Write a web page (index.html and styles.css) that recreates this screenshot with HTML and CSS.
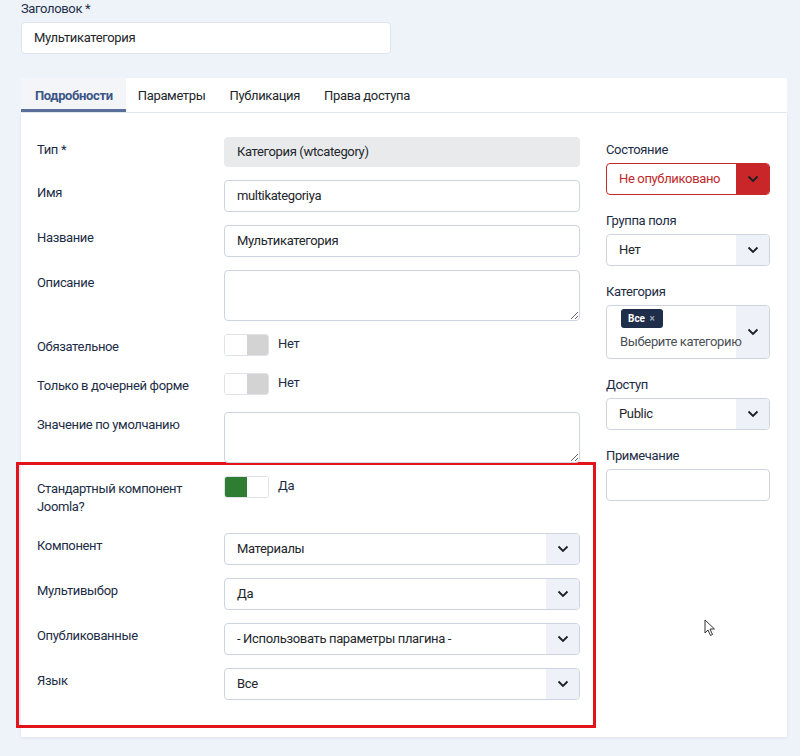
FILE: index.html
```html
<!doctype html>
<html lang="ru">
    <head>
        <meta charset="UTF-8" />
        <meta name="viewport" content="width=device-width, initial-scale=1.0" />
        <title>Поле: Мультикатегория</title>
        <link rel="stylesheet" href="styles.css">
    </head>
    <body>
        <div class="page">
            <label class="title-label">Заголовок *</label>
            <div class="title-input">Мультикатегория</div>

            <div class="tabs">
                <div class="tab active">Подробности</div>
                <div class="tab">Параметры</div>
                <div class="tab">Публикация</div>
                <div class="tab">Права доступа</div>
            </div>

            <div class="card">
                <div class="main">
                    <div class="row">
                        <div class="label">Тип *</div>
                        <div class="input readonly">Категория (wtcategory)</div>
                    </div>
                    <div class="row">
                        <div class="label">Имя</div>
                        <div class="input">multikategoriya</div>
                    </div>
                    <div class="row">
                        <div class="label">Название</div>
                        <div class="input">Мультикатегория</div>
                    </div>
                    <div class="row">
                        <div class="label">Описание</div>
                        <textarea class="textarea"></textarea>
                    </div>
                    <div class="row">
                        <div class="label">Обязательное</div>
                        <div class="switch">
                            <span class="switch-box"><span class="on"></span><span class="off"></span></span>
                            <span class="switch-text">Нет</span>
                        </div>
                    </div>
                    <div class="row">
                        <div class="label">Только в дочерней форме</div>
                        <div class="switch">
                            <span class="switch-box"><span class="on"></span><span class="off"></span></span>
                            <span class="switch-text">Нет</span>
                        </div>
                    </div>
                    <div class="row">
                        <div class="label">Значение по умолчанию</div>
                        <textarea class="textarea"></textarea>
                    </div>

                    <!-- выделенный блок -->
                    <div class="highlight">
                        <div class="row row-tall">
                            <div class="label">Стандартный компонент Joomla?</div>
                            <div class="switch">
                                <span class="switch-box checked"><span class="on"></span><span class="off"></span></span>
                                <span class="switch-text">Да</span>
                            </div>
                        </div>
                        <div class="row">
                            <div class="label">Компонент</div>
                            <div class="select">
                                <span class="select-value">Материалы</span>
                                <span class="select-arrow"><svg width="12" height="8" viewBox="0 0 12 8"><polyline points="1.5,1.5 6,6 10.5,1.5" fill="none" stroke="#1b1f24" stroke-width="1.8"/></svg></span>
                            </div>
                        </div>
                        <div class="row">
                            <div class="label">Мультивыбор</div>
                            <div class="select">
                                <span class="select-value">Да</span>
                                <span class="select-arrow"><svg width="12" height="8" viewBox="0 0 12 8"><polyline points="1.5,1.5 6,6 10.5,1.5" fill="none" stroke="#1b1f24" stroke-width="1.8"/></svg></span>
                            </div>
                        </div>
                        <div class="row">
                            <div class="label">Опубликованные</div>
                            <div class="select">
                                <span class="select-value">- Использовать параметры плагина -</span>
                                <span class="select-arrow"><svg width="12" height="8" viewBox="0 0 12 8"><polyline points="1.5,1.5 6,6 10.5,1.5" fill="none" stroke="#1b1f24" stroke-width="1.8"/></svg></span>
                            </div>
                        </div>
                        <div class="row last">
                            <div class="label">Язык</div>
                            <div class="select">
                                <span class="select-value">Все</span>
                                <span class="select-arrow"><svg width="12" height="8" viewBox="0 0 12 8"><polyline points="1.5,1.5 6,6 10.5,1.5" fill="none" stroke="#1b1f24" stroke-width="1.8"/></svg></span>
                            </div>
                        </div>
                    </div>
                </div>

                <div class="aside">
                    <div class="field">
                        <div class="field-label">Состояние</div>
                        <div class="select danger">
                            <span class="select-value">Не опубликовано</span>
                            <span class="select-arrow"><svg width="12" height="8" viewBox="0 0 12 8"><polyline points="1.5,1.5 6,6 10.5,1.5" fill="none" stroke="#1b1f24" stroke-width="1.8"/></svg></span>
                        </div>
                    </div>
                    <div class="field">
                        <div class="field-label">Группа поля</div>
                        <div class="select">
                            <span class="select-value">Нет</span>
                            <span class="select-arrow"><svg width="12" height="8" viewBox="0 0 12 8"><polyline points="1.5,1.5 6,6 10.5,1.5" fill="none" stroke="#1b1f24" stroke-width="1.8"/></svg></span>
                        </div>
                    </div>
                    <div class="field">
                        <div class="field-label">Категория</div>
                        <div class="select multi">
                            <div class="multi-body">
                                <span class="chip">Все <span class="chip-x">×</span></span>
                                <span class="placeholder">Выберите категорию</span>
                            </div>
                            <span class="select-arrow"><svg width="12" height="8" viewBox="0 0 12 8"><polyline points="1.5,1.5 6,6 10.5,1.5" fill="none" stroke="#1b1f24" stroke-width="1.8"/></svg></span>
                        </div>
                    </div>
                    <div class="field">
                        <div class="field-label">Доступ</div>
                        <div class="select">
                            <span class="select-value">Public</span>
                            <span class="select-arrow"><svg width="12" height="8" viewBox="0 0 12 8"><polyline points="1.5,1.5 6,6 10.5,1.5" fill="none" stroke="#1b1f24" stroke-width="1.8"/></svg></span>
                        </div>
                    </div>
                    <div class="field">
                        <div class="field-label">Примечание</div>
                        <div class="input"></div>
                    </div>
                </div>
            </div>
        </div>

        <svg class="cursor" width="12" height="18" viewBox="0 0 12 18">
            <path d="M1 1 L1 14 L4 11 L6.5 16.5 L8.5 15.5 L6 10 L10.5 10 Z" fill="#fff" stroke="#333" stroke-width="1"/>
        </svg>
    </body>
</html>
```

FILE: styles.css
```css
body {
    font-family: Roboto, "Noto Sans", sans-serif;
    font-size: 13px;
    letter-spacing: -0.35px;
    color: #22262a;
    background-color: #eef2f9;
    margin: 0;
    padding: 0;
}
.page {
    padding: 1px 13px 20px 21px;
}
.title-label {
    display: block;
    line-height: 16px;
    margin-bottom: 5px;
    color: #1f2f4a;
}
.title-input {
    width: 344px;
    height: 30px;
    line-height: 30px;
    padding: 0 12px;
    background-color: #fff;
    border: 1px solid #dfe4ec;
    border-radius: 4px;
}

/* вкладки */
.tabs {
    margin-top: 24px;
    display: flex;
    background-color: #fff;
    border-bottom: 1px solid #e4e8ef;
}
.tab {
    height: 29px;
    padding: 2px 12px 0;
    line-height: 31px;
    border-bottom: 3px solid transparent;
    color: #22262a;
}
.tab.active {
    padding: 2px 13px 0 14px;
    background-color: #f3f5f9;
    border-bottom-color: #5a6f99;
    color: #3b5586;
    font-weight: bold;
}

/* карточка */
.card {
    background-color: #fff;
    box-shadow: 0 1px 3px rgba(30, 50, 90, 0.08);
    padding: 24px 17px 9px 16px;
    display: grid;
    grid-template-columns: 543px 164px;
    gap: 26px;
}
.row {
    display: grid;
    grid-template-columns: 187px 356px;
    margin-bottom: 13px;
}
.row.last {
    margin-bottom: 0;
}
.label {
    padding: 4px 8px 4px 0;
    line-height: 18px;
    color: #1c2c45;
}
.input {
    height: 30px;
    line-height: 30px;
    padding: 0 12px;
    border: 1px solid #cdd4df;
    border-radius: 4px;
    background-color: #fff;
}
.input.readonly {
    height: 28px;
    line-height: 28px;
    background-color: #e9eaec;
    border-color: #e9eaec;
}
.textarea {
    display: block;
    box-sizing: border-box;
    width: 356px;
    height: 51px;
    margin: 0;
    border: 1px solid #cdd4df;
    border-radius: 4px;
    font: inherit;
}

/* переключатель */
.switch {
    display: flex;
    align-items: flex-start;
    gap: 9px;
}
.switch-box {
    display: flex;
    width: 45px;
    height: 22px;
    box-sizing: border-box;
    border: 1px solid #dfe3e9;
    border-radius: 3px;
    overflow: hidden;
}
.switch-box span {
    flex: 1;
}
.switch-box .on {
    background-color: #fff;
}
.switch-box .off {
    background-color: #d3d3d3;
}
.switch-box.checked .on {
    background-color: #2e7d32;
}
.switch-box.checked .off {
    background-color: #fff;
}
.switch-text {
    line-height: 20px;
    color: #1c2c45;
}

/* выделение */
.highlight {
    margin: -14px -16px 0 -21px;
    padding: 11px 13px 25px 18px;
    border: 3px solid #e3131b;
}
.row-tall .label {
    padding-bottom: 4px;
}

/* выпадающие списки */
.select {
    display: flex;
    height: 30px;
    border: 1px solid #cdd4df;
    border-radius: 4px;
    background-color: #fff;
    overflow: hidden;
}
.select-value {
    flex: 1;
    line-height: 30px;
    padding: 0 12px;
    white-space: nowrap;
}
.select-arrow {
    width: 33px;
    flex-shrink: 0;
    display: flex;
    align-items: center;
    justify-content: center;
    background-color: #eef2f8;
}
.select.danger {
    border-color: #c52a2a;
}
.select.danger .select-value {
    color: #c0292a;
}
.select.danger .select-arrow {
    background-color: #c9262a;
}
.select.multi {
    height: 52px;
}
.multi-body {
    flex: 1;
    min-width: 0;
    padding: 3px 0 0 13px;
    display: flex;
    flex-direction: column;
    align-items: flex-start;
}
.chip {
    display: inline-block;
    height: 19px;
    line-height: 19px;
    padding: 0 8px 0 7px;
    margin-left: 1px;
    border-radius: 3px;
    background-color: #1f2e4a;
    color: #fff;
    font-size: 10px;
    font-weight: bold;
    letter-spacing: 0;
}
.chip-x {
    color: #9aa4b5;
    margin-left: 2px;
}
.placeholder {
    position: relative;
    z-index: 1;
    margin-top: 6px;
    line-height: 16px;
    color: #4a4f55;
    white-space: nowrap;
}

/* правая колонка */
.aside {
    padding-top: 4px;
}
.field {
    margin-bottom: 17px;
}
.field-label {
    line-height: 18px;
    margin-bottom: 4px;
    color: #1c2c45;
}
.cursor {
    position: absolute;
    left: 704px;
    top: 619px;
}
```
